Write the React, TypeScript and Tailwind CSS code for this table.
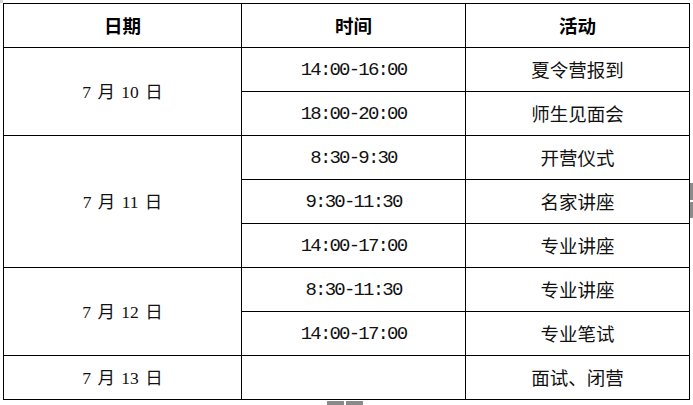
import React from "react";

const cjk = "font-['Noto_Sans_CJK_SC',sans-serif]";
const mono = "font-['Liberation_Mono','Noto_Sans_CJK_SC',monospace] text-[19px] tracking-[-1.8px]";
const serif = "font-['Liberation_Serif','Noto_Sans_CJK_SC',serif] text-[17.5px]";

function Num({ children }: { children: React.ReactNode }) {
  return <span className={mono}>{children}</span>;
}

function DateText({ day }: { day: string }) {
  return (
    <span className={`whitespace-pre ${serif}`}>
      7 <span className={`${cjk} mx-[2px]`}>月</span> {day} <span className={`${cjk} ml-[2px]`}>日</span>
    </span>
  );
}

const cell = "border border-black text-center align-middle text-[18.5px] text-[#111] h-[44px] p-0";

export default function App() {
  return (
    <div className="relative w-[693px] h-[405px] bg-white overflow-hidden">
      <div className="absolute left-0 top-0 w-[3px] h-[3px] bg-gray-300" />
      <table className="mt-[3px] ml-[3px] w-[686px] table-fixed border-collapse">
        <colgroup>
          <col className="w-[238px]" />
          <col className="w-[224px]" />
          <col className="w-[224px]" />
        </colgroup>
        <thead>
          <tr>
            <th className={`${cell} ${cjk} font-bold text-black`}>日期</th>
            <th className={`${cell} ${cjk} font-bold text-black`}>时间</th>
            <th className={`${cell} ${cjk} font-bold text-black`}>活动</th>
          </tr>
        </thead>
        <tbody>
          <tr>
            <td rowSpan={2} className={cell}><DateText day="10" /></td>
            <td className={cell}><Num>14:00-16:00</Num></td>
            <td className={`${cell} ${cjk}`}>夏令营报到</td>
          </tr>
          <tr>
            <td className={cell}><Num>18:00-20:00</Num></td>
            <td className={`${cell} ${cjk}`}>师生见面会</td>
          </tr>
          <tr>
            <td rowSpan={3} className={cell}><DateText day="11" /></td>
            <td className={cell}><Num>8:30-9:30</Num></td>
            <td className={`${cell} ${cjk}`}>开营仪式</td>
          </tr>
          <tr>
            <td className={cell}><Num>9:30-11:30</Num></td>
            <td className={`${cell} ${cjk}`}>名家讲座</td>
          </tr>
          <tr>
            <td className={cell}><Num>14:00-17:00</Num></td>
            <td className={`${cell} ${cjk}`}>专业讲座</td>
          </tr>
          <tr>
            <td rowSpan={2} className={cell}><DateText day="12" /></td>
            <td className={cell}><Num>8:30-11:30</Num></td>
            <td className={`${cell} ${cjk}`}>专业讲座</td>
          </tr>
          <tr>
            <td className={cell}><Num>14:00-17:00</Num></td>
            <td className={`${cell} ${cjk}`}>专业笔试</td>
          </tr>
          <tr>
            <td className={cell}><DateText day="13" /></td>
            <td className={cell}></td>
            <td className={`${cell} ${cjk}`}>面试、闭营</td>
          </tr>
        </tbody>
      </table>
      <div className="absolute left-[327px] top-[401px] w-[36px] h-[4px] bg-[#8a8a8a]">
        <div className="ml-[17px] w-[2px] h-full bg-white" />
      </div>
      <div className="absolute left-[690px] top-[183px] w-[3px] h-[35px] bg-[#8a8a8a] flex flex-col">
        <div className="mt-[17px] h-[2px] w-full bg-white" />
      </div>
    </div>
  );
}
